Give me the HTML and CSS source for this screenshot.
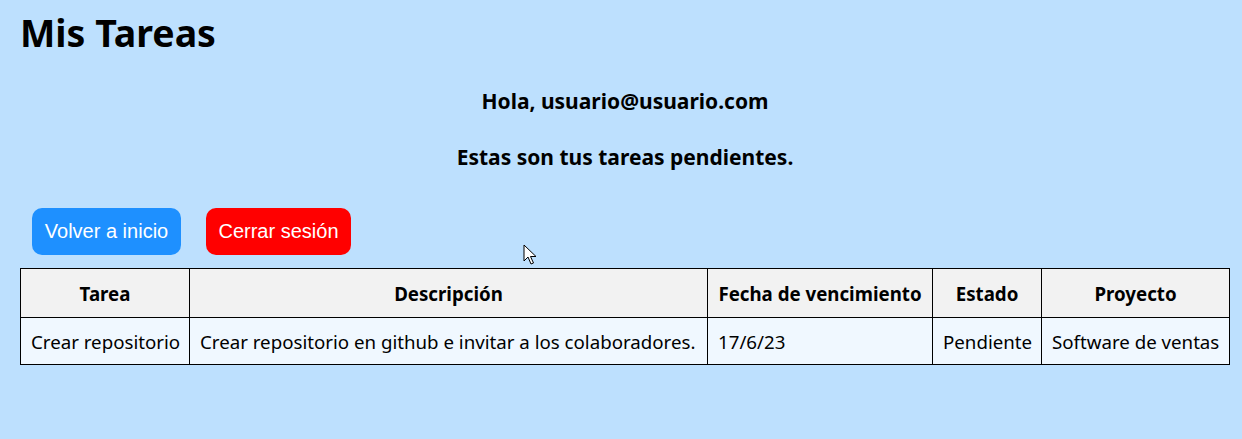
FILE: index.html
```html
<!DOCTYPE html>
<html lang="es">
<head>
<meta charset="utf-8">
<title>Mis Tareas</title>
<link rel="stylesheet" href="styles.css">
</head>
<body>
<main class="page">
  <h1 class="title">Mis Tareas</h1>
  <h3 class="greeting">Hola, usuario@usuario.com</h3>
  <h3 class="subtitle">Estas son tus tareas pendientes.</h3>
  <div class="actions">
    <button class="btn btn-blue">Volver a inicio</button>
    <button class="btn btn-red">Cerrar sesión</button>
  </div>
  <table class="tasks">
    <thead>
      <tr>
        <th class="c-tarea">Tarea</th>
        <th class="c-desc">Descripción</th>
        <th class="c-fecha">Fecha de vencimiento</th>
        <th class="c-estado">Estado</th>
        <th class="c-proy">Proyecto</th>
      </tr>
    </thead>
    <tbody>
      <tr>
        <td>Crear repositorio</td>
        <td>Crear repositorio en github e invitar a los colaboradores.</td>
        <td>17/6/23</td>
        <td>Pendiente</td>
        <td>Software de ventas</td>
      </tr>
    </tbody>
  </table>
</main>
<svg class="cursor" width="14" height="22" viewBox="0 0 14 22"><path d="M1 1 L1 17 L5 13 L8 20 L10.5 19 L7.5 12.5 L13 12.5 Z" fill="#fff" stroke="#000" stroke-width="1" stroke-linejoin="miter"/></svg>
</body>
</html>
```
FILE: styles.css
```css
html, body {
  margin: 0;
  padding: 0;
  background: #bde0fe;
}
body {
  font-family: "Noto Sans", "Open Sans", sans-serif;
  color: #000;
  position: relative;
  min-height: 439px;
}
.page {
  width: 1210px;
  margin-left: 20px;
  display: flex;
  flex-direction: column;
}
.title {
  margin: 0;
  padding-top: 6px;
  font-size: 37.5px;
  line-height: 54px;
  font-weight: 700;
}
.greeting, .subtitle {
  margin: 0;
  text-align: center;
  font-size: 21px;
  line-height: 28px;
  font-weight: 700;
}
.greeting { margin-top: 27px; }
.subtitle { margin-top: 28px; }
.actions {
  display: flex;
  gap: 25px;
  padding-left: 12px;
  margin-top: 37px;
}
.btn {
  font-family: "Liberation Sans", Arial, sans-serif;
  font-size: 20px;
  color: #fff;
  border: none;
  border-radius: 10px;
  height: 47px;
  padding: 0;
}
.btn-blue { background: #1e90ff; width: 149px; }
.btn-red { background: #ff0000; width: 145px; }
.tasks {
  margin-top: 13px;
  border-collapse: collapse;
  width: 1209px;
  table-layout: fixed;
  font-size: 18.7px;
}
.tasks th, .tasks td {
  border: 1px solid #000;
  padding: 0 10px;
  white-space: nowrap;
}
.tasks th {
  background: #f2f2f2;
  height: 48px;
  font-weight: 700;
  text-align: center;
}
.tasks td {
  background: #f0f8ff;
  height: 46px;
  text-align: left;
}
.c-tarea { width: 148px; }
.c-desc { width: 497px; }
.c-fecha { width: 204px; }
.c-estado { width: 88px; }
.c-proy { width: 167px; }
.cursor {
  position: absolute;
  left: 523px;
  top: 244px;
}
```
